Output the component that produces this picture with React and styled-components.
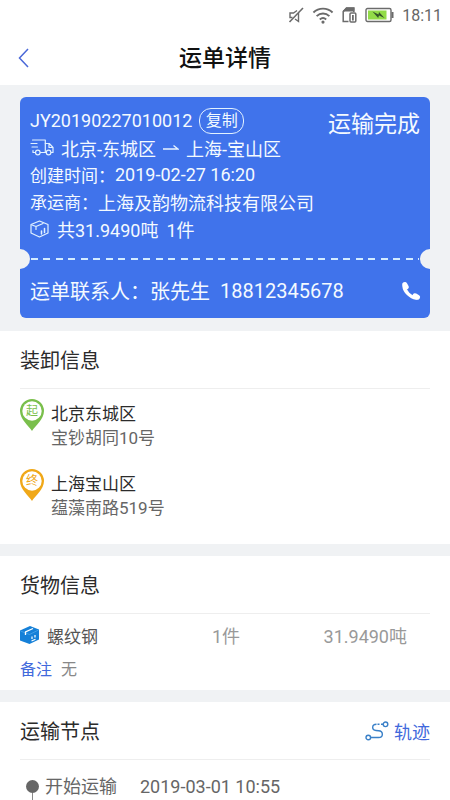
import React from "react";
import styled, { createGlobalStyle } from "styled-components";

const stops = [
  { id: 1, mark: "起", color: "#7abf4c", city: "北京东城区", address: "宝钞胡同10号" },
  { id: 2, mark: "终", color: "#f0a818", city: "上海宝山区", address: "蕴藻南路519号" },
];

const goods = [{ id: 1, name: "螺纹钢", count: "1件", weight: "31.9490吨" }];

const nodes = [{ id: 1, name: "开始运输", time: "2019-03-01 10:55" }];

export default function App() {
  return (
    <Container>
      <GlobalStyle />
      <StatusBar>
        <MuteIcon />
        <WifiIcon />
        <SimIcon />
        <BatteryIcon />
        <Clock>18:11</Clock>
      </StatusBar>
      <Header>
        <BackButton aria-label="返回">
          <BackIcon />
        </BackButton>
        <Title>运单详情</Title>
      </Header>

      <CardArea>
        <Card>
          <Summary>
            <Row>
              <Value>JY20190227010012</Value>
              <CopyButton>复制</CopyButton>
            </Row>
            <Row>
              <TruckIcon />
              <Value>北京-东城区</Value>
              <ArrowIcon />
              <Value>上海-宝山区</Value>
            </Row>
            <Row $gap={0}>
              <Label>创建时间：</Label>
              <Value>2019-02-27 16:20</Value>
            </Row>
            <Row $gap={0}>
              <Label>承运商：</Label>
              <Value>上海及韵物流科技有限公司</Value>
            </Row>
            <Row $gap={8}>
              <BoxOutlineIcon />
              <Value>共31.9490吨</Value>
              <Value>1件</Value>
            </Row>
            <State>运输完成</State>
          </Summary>
          <Tear>
            <Notch $side="left" />
            <Dashes />
            <Notch $side="right" />
          </Tear>
          <Contact>
            <span>运单联系人：张先生</span>
            <span>18812345678</span>
            <CallLink href="tel:18812345678" aria-label="拨打电话">
              <PhoneIcon />
            </CallLink>
          </Contact>
        </Card>
      </CardArea>

      <Section>
        <SectionHead>
          <SectionTitle>装卸信息</SectionTitle>
        </SectionHead>
        <StopList>
          {stops.map((stop) => (
            <Stop key={stop.id}>
              <PinIcon color={stop.color} mark={stop.mark} />
              <div>
                <City>{stop.city}</City>
                <Address>{stop.address}</Address>
              </div>
            </Stop>
          ))}
        </StopList>
      </Section>

      <Section>
        <SectionHead>
          <SectionTitle>货物信息</SectionTitle>
        </SectionHead>
        <GoodsList>
          {goods.map((item) => (
            <Goods key={item.id}>
              <GoodsName>
                <BoxIcon />
                {item.name}
              </GoodsName>
              <Amount>{item.count}</Amount>
              <Amount>{item.weight}</Amount>
            </Goods>
          ))}
        </GoodsList>
        <Remark>
          <RemarkLabel>备注</RemarkLabel>
          <span>无</span>
        </Remark>
      </Section>

      <Section $grow>
        <SectionHead>
          <SectionTitle>运输节点</SectionTitle>
          <TrackButton>
            <TrackIcon />
            轨迹
          </TrackButton>
        </SectionHead>
        <NodeList>
          {nodes.map((node) => (
            <Node key={node.id}>
              <Rail>
                <Dot />
                <Line />
              </Rail>
              <NodeName>{node.name}</NodeName>
              <NodeTime>{node.time}</NodeTime>
            </Node>
          ))}
        </NodeList>
      </Section>
    </Container>
  );
}

function MuteIcon() {
  return (
    <svg width="16" height="18" viewBox="0 0 16 18" fill="none" stroke="#6b6b6b" strokeWidth="1.4">
      <path d="M9 4.500L5.500 7H2v4.500h2.500M7 13l3.500 2.500V7" />
      <path d="M15 2L1.500 16" strokeWidth="1.600" />
    </svg>
  );
}

function WifiIcon() {
  return (
    <svg width="22" height="17" viewBox="0 0 20 16" fill="none" stroke="#6b6b6b" strokeWidth="1.800">
      <path d="M1 5.200C6 .3 14 .3 19 5.200" />
      <path d="M4 8.600c3.500-3.300 8.500-3.300 12 0" />
      <path d="M7 11.800c1.800-1.600 4.200-1.600 6 0" />
      <circle cx="10" cy="14.200" r="1.500" fill="#6b6b6b" stroke="none" />
    </svg>
  );
}

function SimIcon() {
  return (
    <svg width="15" height="16" viewBox="0 0 15 16" fill="none" stroke="#6b6b6b" strokeWidth="1.500">
      <path d="M6.500 14.500H1.200V4.500L4.500 1h7.300v4" />
      <path d="M1.500 4.500L4.500 1.200h7.200v2.500H2z" fill="#6b6b6b" />
      <rect x="8" y="6" width="5.800" height="9" rx="1" />
      <path d="M10.900 8v5.500" strokeWidth="1.800" />
    </svg>
  );
}

function BatteryIcon() {
  return (
    <svg width="29" height="16" viewBox="0 0 29 16">
      <rect x="1" y="1.500" width="25" height="13" rx="1.500" fill="#fff" stroke="#6b6b6b" strokeWidth="1.400" />
      <rect x="3" y="3.500" width="18.500" height="9" fill="#92dc48" />
      <rect x="26.500" y="5" width="2" height="6" fill="#6b6b6b" />
      <path d="M7.500 4.500l6 3 .5-2.500 5.500 6-5.500-2.500-.8 2.500z" fill="#35542a" />
    </svg>
  );
}

function BackIcon() {
  return (
    <svg width="12" height="20" viewBox="0 0 12 20" fill="none" stroke="#4a68d8" strokeWidth="1.500">
      <path d="M10 1L1.500 10l8.500 9" />
    </svg>
  );
}

function TruckIcon() {
  return (
    <svg width="24" height="17" viewBox="0 0 24 17" fill="none" stroke="#e2f2ff" strokeWidth="1.200" strokeLinecap="round" strokeLinejoin="round">
      <path d="M2.500 1h12.800v12.500h-4.800M1 4.500h6M2 8h5.500M3 11.500v2h2" />
      <path d="M15.300 4.500h4l3.700 4v5h-1.700M15.300 13.500h.7M19 4.500v4h4" />
      <circle cx="7.800" cy="13.500" r="2.300" />
      <circle cx="18.600" cy="13.500" r="2.300" />
    </svg>
  );
}

function ArrowIcon() {
  return (
    <svg width="16" height="10" viewBox="0 0 16 10" fill="none" stroke="#e8f4ff" strokeWidth="1.400">
      <path d="M0 6h15l-4.500-3.500" />
    </svg>
  );
}

function BoxOutlineIcon() {
  return (
    <svg width="19" height="18" viewBox="0 0 19 18" fill="none" stroke="#e2f2ff" strokeWidth="1.200" strokeLinejoin="round" strokeLinecap="round">
      <path d="M1 4.500L9.500 1 18 4.500V13l-8.500 4L1 13z" />
      <path d="M6 9.500V6.500l7-3M6 6.500L2 5" />
      <path d="M11.500 14v-3M14.500 12.500V8.500" strokeWidth="1.500" />
    </svg>
  );
}

function PhoneIcon() {
  return (
    <svg width="20" height="20" viewBox="0 0 20 20" fill="none" stroke="#fff" strokeLinecap="round">
      <path d="M3 5C3.500 10.500 9.500 16.500 15 17" strokeWidth="3.400" />
      <path d="M3.800 3.500l1.400 2.500M14 14.800l2.500 1.400" strokeWidth="5" />
    </svg>
  );
}

function PinIcon({ color, mark }) {
  return (
    <svg width="24" height="32" viewBox="0 0 24 32">
      <path d="M12 32C9 27 0 20.500 0 12a12 12 0 0 1 24 0c0 8.500-9 15-12 20z" fill={color} />
      <circle cx="12" cy="12" r="9.700" fill="#fff" />
      <PinText x="12" y="16" fill={color}>
        {mark}
      </PinText>
    </svg>
  );
}

function BoxIcon() {
  return (
    <svg width="19" height="18" viewBox="0 0 19 18">
      <path d="M0 4.500L10 0l9 3.500v10L9.500 18 0 14.500z" fill="#1580d8" />
      <path d="M.5 5l9 3.500L18.500 4" fill="none" stroke="#5cb0f0" strokeWidth=".6" />
      <path d="M5.500 9V5.800l7.500-3.300" fill="none" stroke="#fff" strokeWidth="1.300" />
      <path d="M12 13v-2.500M15 11.500V9M11.500 15l4-1.700" fill="none" stroke="#fff" strokeWidth="1.200" />
    </svg>
  );
}

function TrackIcon() {
  return (
    <svg width="24" height="20" viewBox="0 0 24 20" fill="none" stroke="#3a80c8" strokeWidth="1.400">
      <circle cx="3.300" cy="16.500" r="2.300" />
      <circle cx="20.500" cy="3.300" r="2.300" />
      <path d="M5.600 16.500h8c5 0 5-6.500 0-6.800l-2.600-.2c-4.500-.4-4.500-6.200.5-6.200" />
      <path d="M12.500 3.300h2M16 3.300h2" />
    </svg>
  );
}

const GlobalStyle = createGlobalStyle`
  * {
    box-sizing: border-box;
  }
  body {
    margin: 0;
    background-color: #f0f2f4;
    font-family: Roboto, "Noto Sans CJK SC", sans-serif;
  }
  button {
    padding: 0;
    border: none;
    background: none;
    color: inherit;
    font-family: inherit;
  }
  h1, h2, ul {
    margin: 0;
    padding: 0;
    font-weight: 400;
    list-style: none;
  }
  svg {
    flex-shrink: 0;
  }
`;

const Container = styled.div`
  min-height: 100vh;
  display: flex;
  flex-direction: column;
`;
const StatusBar = styled.div`
  display: flex;
  align-items: center;
  justify-content: flex-end;
  gap: 8px;
  height: 30px;
  padding-right: 8px;
  background-color: #fff;
`;
const Clock = styled.span`
  font-size: 16px;
  color: #666;
`;
const Header = styled.header`
  display: grid;
  grid-template-columns: 60px 1fr 60px;
  align-items: center;
  height: 55px;
  background-color: #fff;
`;
const BackButton = styled.button`
  display: flex;
  padding-left: 18px;
`;
const Title = styled.h1`
  padding-top: 3px;
  text-align: center;
  font-size: 23px;
  line-height: 28px;
  font-weight: 500;
  color: #111;
`;

const CardArea = styled.div`
  padding: 12px 20px 13px;
`;
const Card = styled.div`
  border-radius: 6px;
  background-color: #4073eb;
  color: #f4faff;
`;
const Summary = styled.div`
  position: relative;
  padding: 10px 10px 7px;
`;
const Row = styled.div`
  display: flex;
  align-items: center;
  gap: ${({ $gap = 7 }) => $gap}px;
  height: 27px;
  white-space: nowrap;
`;
const Label = styled.span`
  font-size: 17px;
`;
const Value = styled.span`
  font-size: 18px;
`;
const CopyButton = styled.button`
  width: 45px;
  height: 26px;
  border: 1px solid #e2f2ff;
  border-radius: 12px;
  font-size: 16px;
  line-height: 24px;
`;
const State = styled.div`
  position: absolute;
  top: 13px;
  right: 10px;
  font-size: 23px;
  line-height: 30px;
`;
const Tear = styled.div`
  position: relative;
  display: flex;
  align-items: center;
  height: 20px;
  padding: 0 11px;
`;
const Dashes = styled.div`
  flex: 1;
  height: 2px;
  background: repeating-linear-gradient(
    90deg,
    #d4ecff 0 7px,
    transparent 7px 12px,
    #d4ecff 12px 19px,
    transparent 19px 25px
  );
`;
const Notch = styled.div`
  position: absolute;
  top: 0;
  ${({ $side }) => $side}: 0;
  width: 10px;
  height: 20px;
  border-radius: ${({ $side }) => ($side === "left" ? "0 10px 10px 0" : "10px 0 0 10px")};
  background-color: #f0f2f4;
`;
const Contact = styled.div`
  display: flex;
  align-items: center;
  gap: 10px;
  height: 49px;
  padding: 0 9px 6px 10px;
  font-size: 20px;
`;
const CallLink = styled.a`
  display: flex;
  margin-left: auto;
`;

const Section = styled.section`
  display: flex;
  flex-direction: column;
  flex-grow: ${({ $grow }) => ($grow ? 1 : 0)};
  padding: 0 20px;
  background-color: #fff;

  & + & {
    margin-top: 12px;
  }
`;
const SectionHead = styled.div`
  display: flex;
  align-items: center;
  justify-content: space-between;
  height: 58px;
  border-bottom: 1px solid #eee;
`;
const SectionTitle = styled.h2`
  font-size: 20px;
  color: #2b2b2b;
`;
const StopList = styled.ul`
  display: flex;
  flex-direction: column;
  gap: 19px;
  padding: 10px 0 24px;
`;
const Stop = styled.li`
  display: flex;
  gap: 7px;
`;
const PinText = styled.text`
  font-size: 12px;
  text-anchor: middle;
`;
const City = styled.div`
  padding-top: 3px;
  font-size: 17px;
  line-height: 24px;
  color: #2b2b2b;
`;
const Address = styled.div`
  font-size: 17px;
  line-height: 24px;
  color: #666;
`;
const GoodsList = styled.ul`
  padding-top: 4px;
`;
const Goods = styled.li`
  display: grid;
  grid-template-columns: 192px 1fr auto;
  align-items: center;
  height: 34px;
  padding-right: 23px;
`;
const GoodsName = styled.div`
  display: flex;
  align-items: center;
  gap: 8px;
  font-size: 17px;
  color: #555;
`;
const Amount = styled.div`
  font-size: 18px;
  color: #999;
`;
const Remark = styled.div`
  display: flex;
  gap: 9px;
  padding: 6px 0 8px;
  font-size: 16px;
  line-height: 24px;
  color: #888;
`;
const RemarkLabel = styled.span`
  color: #4169dc;
`;
const TrackButton = styled.button`
  display: flex;
  align-items: center;
  gap: 5px;
  font-size: 18px;
  color: #4169dc;
`;
const NodeList = styled.ul`
  flex: 1;
  display: flex;
  padding: 14px 6px 0;
`;
const Node = styled.li`
  display: flex;
  font-size: 18px;
  line-height: 26px;
  color: #666;
`;
const Rail = styled.div`
  display: flex;
  flex-direction: column;
  align-items: center;
  padding-top: 6px;
  margin-right: 6px;
`;
const Dot = styled.div`
  width: 13px;
  height: 13px;
  border-radius: 50%;
  background-color: #666;
`;
const Line = styled.div`
  flex: 1;
  width: 1px;
  background-color: #888;
`;
const NodeName = styled.div`
  width: 95px;
`;
const NodeTime = styled.div``;
